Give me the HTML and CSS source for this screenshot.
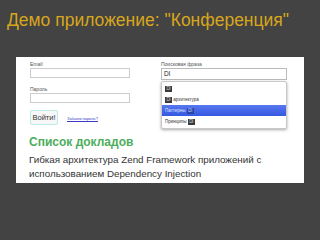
FILE: index.html
```html
<!DOCTYPE html>
<html lang="ru">
<head>
<meta charset="utf-8">
<link rel="stylesheet" href="styles.css">
</head>
<body>
<h1 class="title">Демо приложение: "Конференция"</h1>
<div class="panel">
  <div class="forms">
    <div class="login">
      <label class="lbl">Email</label>
      <div class="input"></div>
      <label class="lbl lbl-gap">Пароль</label>
      <div class="input"></div>
      <div class="actions">
        <span class="btn">Войти!</span>
        <a class="forgot" href="#">Забыли пароль?</a>
      </div>
    </div>
    <div class="search">
      <label class="lbl">Поисковая фраза</label>
      <div class="input input-search">Dl</div>
      <ul class="menu">
        <li class="item"><span class="hl">Dl</span></li>
        <li class="item"><span class="hl">Dl</span> архитектура</li>
        <li class="item active">Паттерны <span class="hl">Dl</span></li>
        <li class="item">Принципы <span class="hl">Dl</span></li>
      </ul>
    </div>
  </div>
  <h2 class="heading">Список докладов</h2>
  <p class="talk">Гибкая архитектура Zend Framework приложений с использованием Dependency Injection</p>
</div>
</body>
</html>
```
FILE: styles.css
```css
html, body {
  margin: 0;
  padding: 0;
}
body {
  background: #434343;
  width: 320px;
  height: 240px;
  overflow: hidden;
  font-family: "Liberation Sans", Arial, sans-serif;
}
.title {
  margin: 0;
  padding: 9px 0 0 7px;
  height: 48px;
  box-sizing: border-box;
  font-size: 17.5px;
  font-weight: normal;
  color: #d8a61c;
  line-height: 22px;
  white-space: nowrap;
}
.panel {
  margin: 9px 16px 0 16px;
  width: 288px;
  height: 126px;
  box-sizing: border-box;
  background: #fff;
  padding: 4px 14px 0 13px;
}
.forms {
  display: flex;
  height: 70px;
}
.login {
  width: 100px;
  padding-left: 1px;
}
.lbl {
  display: block;
  font-size: 5px;
  line-height: 7px;
  color: #555;
}
.lbl-gap {
  margin-top: 8px;
}
.input {
  height: 10px;
  box-sizing: border-box;
  border: 1px solid #ccc;
  background: #fff;
}
.actions {
  display: flex;
  align-items: center;
  margin-top: 7px;
  gap: 9px;
}
.btn {
  display: block;
  width: 28px;
  height: 15px;
  box-sizing: border-box;
  border: 1px solid #b8ece4;
  border-radius: 2px;
  background: #f7f7f7;
  font-size: 7.5px;
  line-height: 13px;
  text-align: center;
  color: #333;
}
.forgot {
  font-size: 4px;
  color: #3a3acc;
  text-decoration: underline;
  margin-top: 2px;
}
.search {
  position: relative;
  margin-left: 31px;
  width: 126px;
}
.input-search {
  height: 12px;
  font-size: 6.5px;
  line-height: 10px;
  padding-left: 2px;
  color: #222;
  border-color: #bbb;
}
.menu {
  position: absolute;
  left: 0;
  top: 20px;
  width: 126px;
  margin: 0;
  padding: 1px 0;
  list-style: none;
  background: #fff;
  border: 1px solid #c8c8c8;
  border-radius: 2px;
  box-shadow: 0 1px 3px rgba(0,0,0,0.35);
  box-sizing: border-box;
}
.item {
  height: 11px;
  line-height: 11px;
  font-size: 4.5px;
  color: #333;
  padding-left: 3px;
}
.item.active {
  background: linear-gradient(#5878f0, #3458e0);
  color: #dfe6ff;
}
.hl {
  display: inline-block;
  background: #3a3a3a;
  color: #ddd;
  font-size: 4.5px;
  line-height: 6px;
  min-width: 5px;
  padding: 0 1px;
  text-align: center;
  vertical-align: middle;
}
.active .hl {
  background: #2c44a8;
  color: #cfd8ff;
}
.heading {
  margin: 4px 0 0 0;
  font-size: 12px;
  line-height: 15px;
  font-weight: bold;
  color: #4cae5c;
}
.talk {
  margin: 3px 0 0 0;
  font-size: 9.8px;
  line-height: 14px;
  color: #333;
}
```
